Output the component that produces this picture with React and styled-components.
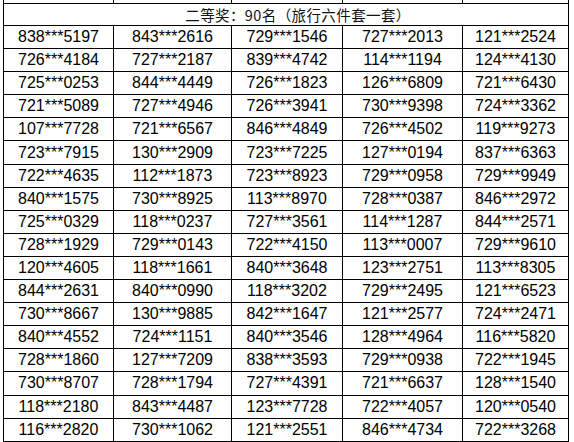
import React from "react";
import styled, { createGlobalStyle } from "styled-components";

const rows = [
  ["838***5197", "843***2616", "729***1546", "727***2013", "121***2524"],
  ["726***4184", "727***2187", "839***4742", "114***1194", "124***4130"],
  ["725***0253", "844***4449", "726***1823", "126***6809", "721***6430"],
  ["721***5089", "727***4946", "726***3941", "730***9398", "724***3362"],
  ["107***7728", "721***6567", "846***4849", "726***4502", "119***9273"],
  ["723***7915", "130***2909", "723***7225", "127***0194", "837***6363"],
  ["722***4635", "112***1873", "723***8923", "729***0958", "729***9949"],
  ["840***1575", "730***8925", "113***8970", "728***0387", "846***2972"],
  ["725***0329", "118***0237", "727***3561", "114***1287", "844***2571"],
  ["728***1929", "729***0143", "722***4150", "113***0007", "729***9610"],
  ["120***4605", "118***1661", "840***3648", "123***2751", "113***8305"],
  ["844***2631", "840***0990", "118***3202", "729***2495", "121***6523"],
  ["730***8667", "130***9885", "842***1647", "121***2577", "724***2471"],
  ["840***4552", "724***1151", "840***3546", "128***4964", "116***5820"],
  ["728***1860", "127***7209", "838***3593", "729***0938", "722***1945"],
  ["730***8707", "728***1794", "727***4391", "721***6637", "128***1540"],
  ["118***2180", "843***4487", "123***7728", "722***4057", "120***0540"],
  ["116***2820", "730***1062", "121***2551", "846***4734", "722***3268"],
];

const GlobalStyle = createGlobalStyle`
  html, body {
    margin: 0;
    padding: 0;
    background: #ffffff;
    overflow: hidden;
  }
`;

const Page = styled.div`
  width: 574px;
  height: 442px;
  overflow: hidden;
  padding-left: 3px;
  box-sizing: border-box;
`;

const Sheet = styled.div`
  display: grid;
  grid-template-columns: 109px 117px 110px 119px 105px;
  grid-template-rows: 3px 21px;
  grid-auto-rows: 22.1px;
  gap: 1px;
  width: max-content;
  margin-top: -1px;
  padding: 1px;
  background: #000000;
`;

const Cell = styled.div`
  background: #ffffff;
  display: flex;
  align-items: center;
  justify-content: center;
  font-family: "Liberation Sans", Arial, sans-serif;
  font-size: 16px;
  color: #000000;
  white-space: nowrap;
`;

const Header = styled(Cell)`
  grid-column: 1 / -1;
  padding-left: 24px;
  font-family: "Noto Sans CJK SC", "Liberation Sans", sans-serif;
  font-size: 14.5px;
  color: #111111;
  letter-spacing: 0.4px;
`;

export default function App() {
  return (
    <Page>
      <GlobalStyle />
      <Sheet>
        {[0, 1, 2, 3, 4].map((i) => (
          <Cell key={"top" + i} />
        ))}
        <Header>二等奖：90名（旅行六件套一套）</Header>
        {rows.flatMap((row, r) =>
          row.map((v, c) => <Cell key={r + "-" + c}>{v}</Cell>)
        )}
      </Sheet>
    </Page>
  );
}
